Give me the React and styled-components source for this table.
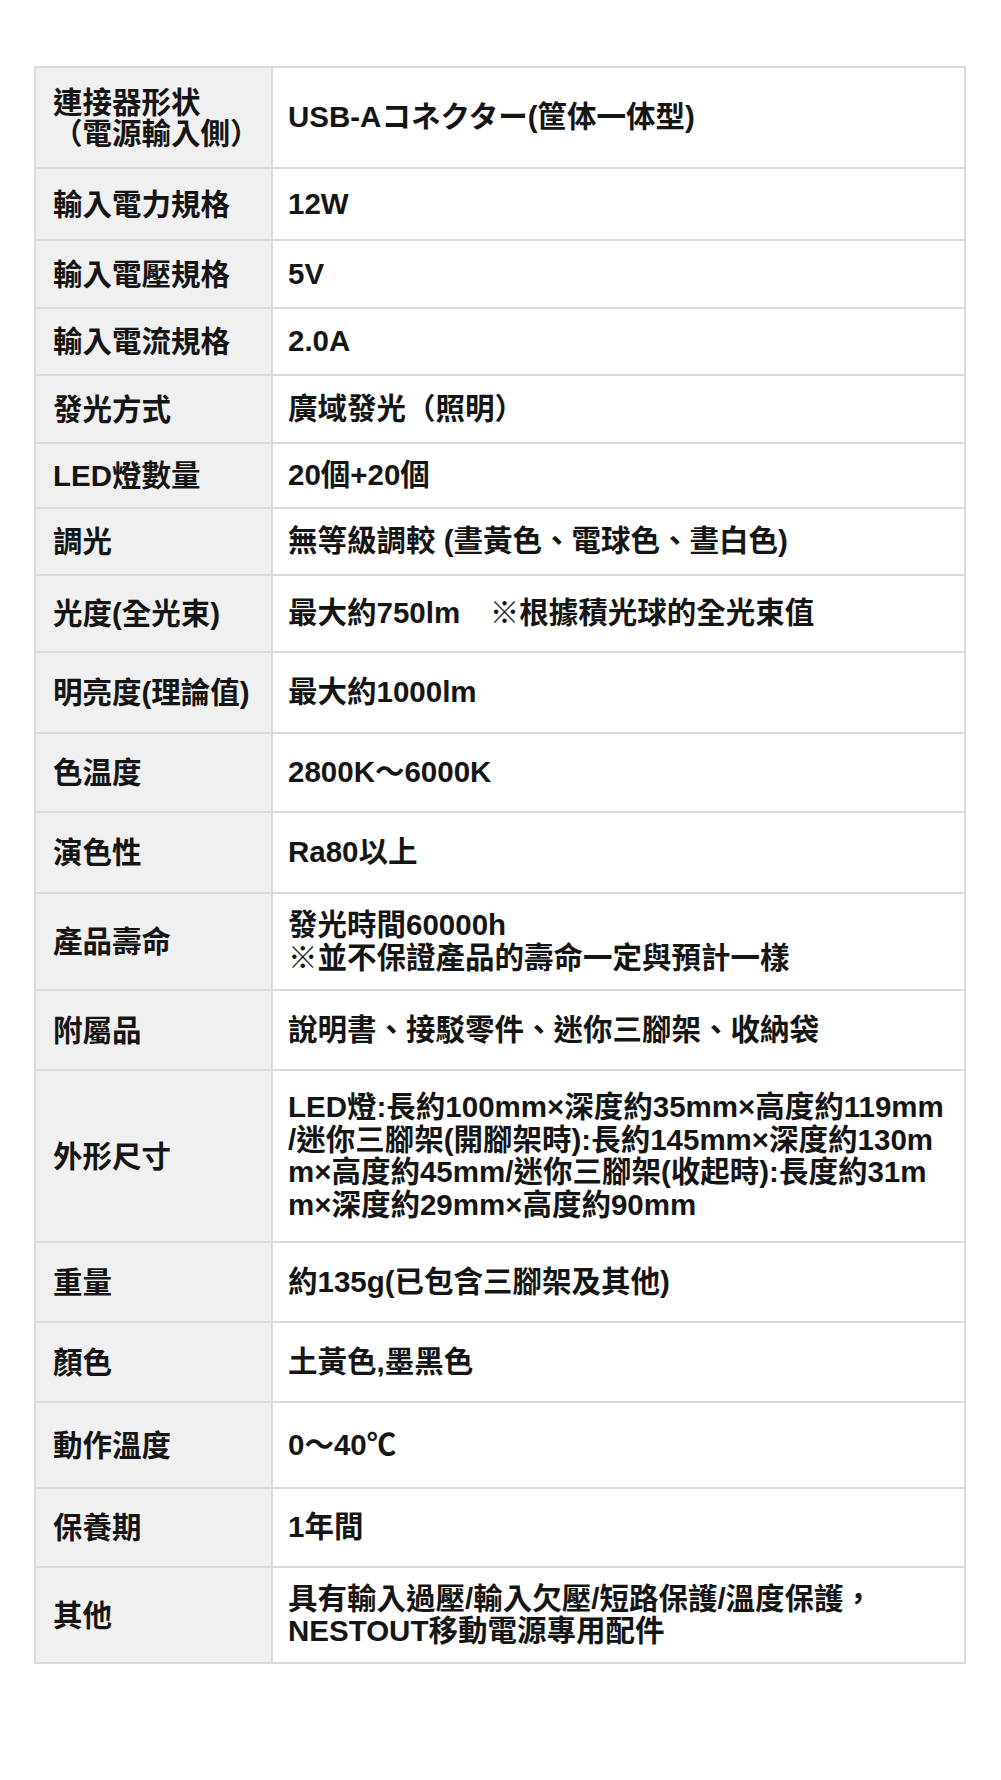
import React from "react";
import styled, { createGlobalStyle } from "styled-components";

const specs = [
  { h: 101, label: ["連接器形状", "（電源輸入側）"], value: ["USB-Aコネクター(筐体一体型)"] },
  { h: 72, label: ["輸入電力規格"], value: ["12W"] },
  { h: 68, label: ["輸入電壓規格"], value: ["5V"] },
  { h: 67, label: ["輸入電流規格"], value: ["2.0A"] },
  { h: 68, label: ["發光方式"], value: ["廣域發光（照明）"] },
  { h: 65, label: ["LED燈數量"], value: ["20個+20個"] },
  { h: 67, label: ["調光"], value: ["無等級調較 (晝黃色、電球色、晝白色)"] },
  { h: 77, label: ["光度(全光束)"], value: ["最大約750lm　※根據積光球的全光束值"] },
  { h: 81, label: ["明亮度(理論值)"], value: ["最大約1000lm"] },
  { h: 79, label: ["色温度"], value: ["2800K～6000K"] },
  { h: 81, label: ["演色性"], value: ["Ra80以上"] },
  { h: 97, label: ["產品壽命"], value: ["發光時間60000h", "※並不保證產品的壽命一定與預計一樣"] },
  { h: 80, label: ["附屬品"], value: ["說明書、接駁零件、迷你三腳架、收納袋"] },
  {
    h: 172,
    label: ["外形尺寸"],
    value: [
      "LED燈:長約100mm×深度約35mm×高度約119mm",
      "/迷你三腳架(開腳架時):長約145mm×深度約130m",
      "m×高度約45mm/迷你三腳架(收起時):長度約31m",
      "m×深度約29mm×高度約90mm",
    ],
  },
  { h: 80, label: ["重量"], value: ["約135g(已包含三腳架及其他)"] },
  { h: 80, label: ["顏色"], value: ["土黃色,墨黑色"] },
  { h: 86, label: ["動作溫度"], value: ["0～40℃"] },
  { h: 79, label: ["保養期"], value: ["1年間"] },
  { h: 96, label: ["其他"], value: ["具有輸入過壓/輸入欠壓/短路保護/溫度保護，", "NESTOUT移動電源專用配件"] },
];

const App = () => {
  return (
    <>
      <GlobalStyle />
      <Page>
        <Table>
          {specs.map((row, ind) => (
            <Row key={ind} h={row.h}>
              <Head>
                {row.label.map((t, i) => (
                  <Line key={i}>{t}</Line>
                ))}
              </Head>
              <Value>
                {row.value.map((t, i) => (
                  <Line key={i}>{t}</Line>
                ))}
              </Value>
            </Row>
          ))}
        </Table>
      </Page>
    </>
  );
};

export default App;

// styles
const GlobalStyle = createGlobalStyle`
  html, body {
    margin: 0;
    padding: 0;
    background: #ffffff;
  }
  body {
    font-family: "Liberation Sans", "Noto Sans CJK TC", sans-serif;
    color: #151515;
  }
`;

const Page = styled.div`
  width: 1001px;
  min-height: 1780px;
  padding: 66px 0 0 34px;
  box-sizing: border-box;
`;

const Table = styled.div`
  width: 932px;
  display: flex;
  flex-direction: column;
  border: 2px solid #dadada;
  border-bottom: none;
  box-sizing: border-box;
`;

const Row = styled.div`
  display: flex;
  height: ${(p) => p.h}px;
  border-bottom: 2px solid #dadada;
  box-sizing: border-box;
`;

const Cell = styled.div`
  display: flex;
  flex-direction: column;
  justify-content: center;
  font-size: 29.5px;
  font-weight: 700;
  box-sizing: border-box;
`;

const Head = styled(Cell)`
  width: 237px;
  flex-shrink: 0;
  padding-left: 17px;
  background: #f0f0f0;
  border-right: 2px solid #dadada;
  line-height: 31px;
`;

const Value = styled(Cell)`
  flex: 1;
  padding-left: 15px;
  line-height: 32.5px;
`;

const Line = styled.span`
  display: block;
  white-space: nowrap;
`;
